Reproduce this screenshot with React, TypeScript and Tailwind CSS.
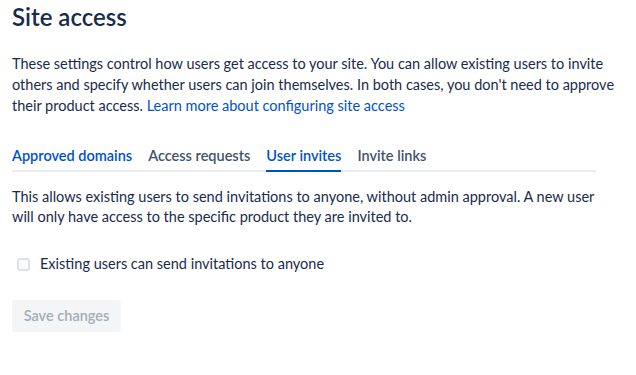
import React from "react";

export default function App() {
  const tabs = ["Approved domains", "Access requests", "User invites", "Invite links"];
  return (
    <div className="w-[636px] h-[375px] bg-white pl-3 pr-2 pt-[2px] text-[#172b4d]" style={{ fontFamily: 'Lato, "Noto Sans", sans-serif' }}>
      <h1 className="text-[24px] leading-[30px] font-semibold text-[#172b4d]">Site access</h1>
      <p className="mt-[21px] text-[14.5px] leading-[21px] w-[612px]">
        These settings control how users get access to your site. You can allow existing users to invite others and specify whether users can join themselves. In both cases, you don't need to approve their product access.{" "}
        <span className="text-[#0052cc]">Learn more about configuring site access</span>
      </p>
      <div className="mt-[29px] w-[584px] flex gap-4 border-b-2 border-[#ebecf0]">
        {tabs.map((t, i) => (
          <div key={t} className={"relative pt-[1px] pb-[4px] text-[14.5px] leading-[20px] font-semibold " + (i === 2 || i === 0 ? "text-[#0052cc]" : "text-[#42526e]")}>
            {t}
            {i === 2 && <div className="absolute left-0 right-0 -bottom-[2px] h-[2px] bg-[#0052cc]" />}
          </div>
        ))}
      </div>
      <p className="mt-[15px] text-[14.5px] leading-[20px] w-[584px]">
        This allows existing users to send invitations to anyone, without admin approval. A new user will only have access to the specific product they are invited to.
      </p>
      <label className="mt-[27px] flex items-center gap-[10px] pl-[5px] text-[14.5px] leading-[20px]">
        <span className="w-[13px] h-[13px] rounded-[3px] border-2 border-[#dfe1e6] bg-[#fafbfc]" />
        Existing users can send invitations to anyone
      </label>
      <button className="mt-[26px] h-[32px] w-[109px] rounded-[3px] bg-[#f4f5f7] text-[#a5adba] text-[14.5px] font-semibold">
        Save changes
      </button>
    </div>
  );
}
